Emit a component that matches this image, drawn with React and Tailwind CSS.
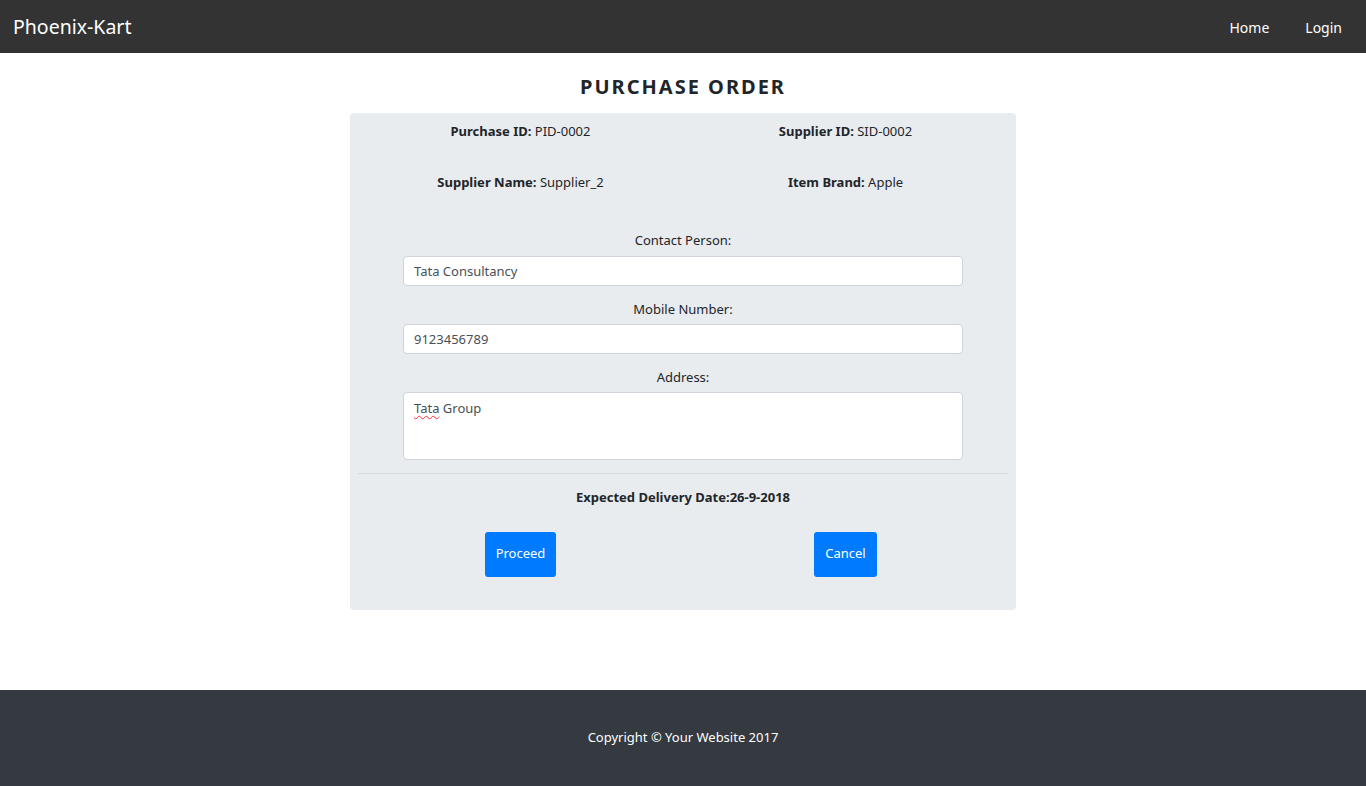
import React from "react";

const Info = ({ label, value }) => (
  <div className="flex-1 text-center text-[13px] text-[#212529]">
    <span className="font-bold">{label}</span> {value}
  </div>
);

export default function App() {
  return (
    <div className="min-h-[786px] flex flex-col bg-white font-['Noto_Sans',sans-serif]">
      <nav className="h-[53px] bg-[#333333] flex items-center justify-between pl-[13px] pr-[24px]">
        <a href="#" className="text-[19.5px] text-white">Phoenix-Kart</a>
        <div className="flex items-center gap-[36px] text-[14px] text-white pt-[2px]">
          <a href="#">Home</a>
          <a href="#">Login</a>
        </div>
      </nav>

      <main className="flex-1 flex flex-col items-center pb-[80px]">
        <h2 className="mt-[24px] mb-[16px] text-[20px] font-bold tracking-[2px] text-[#212529] leading-none">
          PURCHASE ORDER
        </h2>
        <div className="w-[666px] bg-[#e9ecef] rounded-[4px] px-[8px] pt-[8px] pb-[33px]">
          <div className="flex h-[21px] items-center">
            <Info label="Purchase ID:" value="PID-0002" />
            <Info label="Supplier ID:" value="SID-0002" />
          </div>
          <div className="flex h-[21px] items-center mt-[30px]">
            <Info label="Supplier Name:" value="Supplier_2" />
            <Info label="Item Brand:" value="Apple" />
          </div>

          <div className="mt-[37px] flex flex-col items-center text-[13px] text-[#212529]">
            <label className="h-[20px] leading-[20px]">Contact Person:</label>
            <input
              readOnly
              value="Tata Consultancy"
              className="mt-[6px] w-[560px] h-[30px] bg-white border border-[#ced4da] rounded-[4px] px-[10px] text-[13px] text-[#495057] outline-none"
            />
            <label className="mt-[13px] h-[20px] leading-[20px]">Mobile Number:</label>
            <input
              readOnly
              value="9123456789"
              className="mt-[5px] w-[560px] h-[30px] bg-white border border-[#ced4da] rounded-[4px] px-[10px] text-[13px] text-[#495057] outline-none"
            />
            <label className="mt-[13px] h-[20px] leading-[20px]">Address:</label>
            <div className="mt-[5px] w-[560px] h-[68px] bg-white border border-[#ced4da] rounded-[4px] px-[10px] pt-[6px] text-[13px] text-[#495057]">
              <span className="underline decoration-wavy decoration-red-500 decoration-1 underline-offset-2">Tata</span> Group
            </div>
          </div>

          <hr className="mt-[13px] border-t border-[#d6d9dc]" />

          <p className="mt-[14px] text-center text-[13px] font-bold text-[#212529]">
            Expected Delivery Date:26-9-2018
          </p>

          <div className="flex mt-[24px]">
            <div className="flex-1 flex justify-center">
              <button className="h-[45px] w-[71px] bg-[#007bff] text-white text-[13px] rounded-[3px]">Proceed</button>
            </div>
            <div className="flex-1 flex justify-center">
              <button className="h-[45px] w-[63px] bg-[#007bff] text-white text-[13px] rounded-[3px]">Cancel</button>
            </div>
          </div>
        </div>
      </main>

      <footer className="h-[96px] bg-[#343a40] flex items-center justify-center text-[13px] text-white">
        Copyright © Your Website 2017
      </footer>
    </div>
  );
}
